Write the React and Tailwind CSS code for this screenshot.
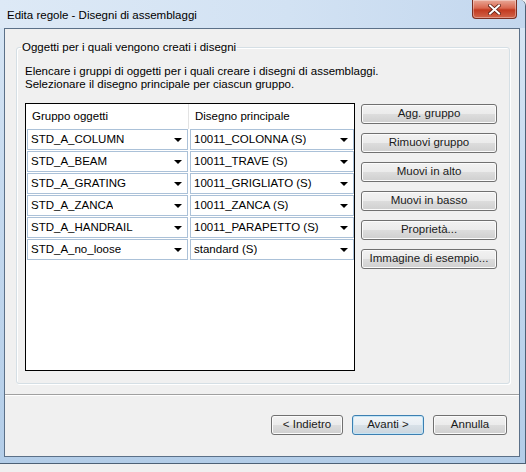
import React from 'react';

const rows = [
    ['STD_A_COLUMN', '10011_COLONNA (S)'],
    ['STD_A_BEAM', '10011_TRAVE (S)'],
    ['STD_A_GRATING', '10011_GRIGLIATO (S)'],
    ['STD_A_ZANCA', '10011_ZANCA (S)'],
    ['STD_A_HANDRAIL', '10011_PARAPETTO (S)'],
    ['STD_A_no_loose', 'standard (S)'],
];

const sideButtons = ['Agg. gruppo', 'Rimuovi gruppo', 'Muovi in alto', 'Muovi in basso', 'Proprietà...', 'Immagine di esempio...'];

const btn =
    'flex items-center justify-center font-normal rounded-[3px] border border-[#707070] bg-[linear-gradient(to_bottom,#f2f2f2_0%,#ebebeb_50%,#dddddd_50%,#cfcfcf_100%)] shadow-[inset_0_0_0_1px_#fbfbfb] text-[#1a1a1a]';

const Combo = ({ value, width }) => (
    <div className={`${width} h-[21px] flex items-center justify-between border border-[#abc1d8] bg-white pl-[3px] pr-[4px]`}>
        <span className="truncate">{value}</span>
        <span className="w-0 h-0 border-x-[4px] border-t-[4px] border-x-transparent border-t-black mr-[1px]" />
    </div>
);

const App = () => {
    return (
        <div className="w-[526px] h-[472px] overflow-hidden bg-[#f0f0f0] text-[11.5px] text-black" style={{ fontFamily: '"Liberation Sans", Arial, sans-serif' }}>
            {/* window frame */}
            <div className="h-[464px] flex flex-col border-r border-b border-[#4d6176] rounded-tr-[6px] bg-[linear-gradient(to_bottom,#d9e7f5_0%,#c6daef_40%,#b3cde8_100%)] pl-[4px] pr-[5px]">
                <div className="h-[28px] flex items-start justify-between bg-[linear-gradient(to_right,#dde9f6_0%,#d2e2f3_55%,#c3d7ee_100%)] -ml-[4px] -mr-[5px] pl-[7px] pr-[8px] rounded-tr-[6px]">
                    <span className="pt-[9px] leading-[13px]">Edita regole - Disegni di assemblaggi</span>
                    <button className="w-[45px] h-[19px] flex items-center justify-center rounded-b-[4px] border border-t-0 border-[#7a2f22] bg-[linear-gradient(to_bottom,#e9a897_0%,#d9674f_45%,#c23a20_55%,#d2654a_100%)] shadow-[inset_0_0_0_1px_rgba(255,255,255,0.35)]">
                        <svg width="13" height="11" viewBox="0 0 13 11">
                            <path d="M2 1.5 L11 9.5 M11 1.5 L2 9.5" stroke="#5a1d12" strokeWidth="3.6" strokeLinecap="square" />
                            <path d="M2 1.5 L11 9.5 M11 1.5 L2 9.5" stroke="#ffffff" strokeWidth="2" strokeLinecap="square" />
                        </svg>
                    </button>
                </div>

                {/* client area */}
                <div className="flex-1 mb-[6px] flex flex-col border border-[#5b7088] bg-[#f0f0f0] pt-[12px]">
                    <fieldset className="ml-[11px] mr-[9px] px-[8px] pb-[12px] border border-[#d5dfe5] rounded-[3px] shadow-[inset_1px_1px_0_#ffffff,1px_1px_0_#ffffff]">
                        <legend className="-ml-[4px] px-[1px] leading-[13px]">Oggetti per i quali vengono creati i disegni</legend>
                        <p className="mt-[11px] leading-[13px]">
                            Elencare i gruppi di oggetti per i quali creare i disegni di assemblaggi.
                            <br />
                            Selezionare il disegno principale per ciascun gruppo.
                        </p>
                        <div className="mt-[12px] flex items-start">
                            <div className="w-[330px] h-[268px] border border-black bg-white">
                                <div className="h-[25px] flex">
                                    <div className="w-[163px] border-r border-[#e3e3e3] pl-[6px] flex items-center">Gruppo oggetti</div>
                                    <div className="flex-1 pl-[6px] flex items-center">Disegno principale</div>
                                </div>
                                <div className="flex flex-col gap-[1px] pl-[1px]">
                                    {rows.map(([g, d]) => (
                                        <div key={g} className="flex gap-[2px]">
                                            <Combo value={g} width="w-[161px]" />
                                            <Combo value={d} width="w-[164px]" />
                                        </div>
                                    ))}
                                </div>
                            </div>
                            <div className="ml-[6px] mt-[1px] w-[136px] flex flex-col gap-[9px]">
                                {sideButtons.map((b) => (
                                    <button key={b} className={`${btn} h-[20px]`}>{b}</button>
                                ))}
                            </div>
                        </div>
                    </fieldset>

                    <div className="mt-[10px] h-[2px] border-t border-[#a0a0a0] border-b border-b-white" />

                    <div className="mt-[19px] flex justify-end gap-[9px] pr-[12px]">
                        <button className={`${btn} w-[72px] h-[20px]`}>&lt; Indietro</button>
                        <button className="w-[72px] h-[20px] flex items-center justify-center font-normal rounded-[3px] border border-[#3c7fb1] bg-[linear-gradient(to_bottom,#f1f5f8_0%,#e8eef3_50%,#d8e1e8_50%,#ccd6de_100%)] shadow-[inset_0_0_0_1px_#c4e5f6] text-[#1a1a1a]">Avanti &gt;</button>
                        <button className={`${btn} w-[74px] h-[20px]`}>Annulla</button>
                    </div>
                </div>
            </div>
        </div>
    );
};

export default App;
